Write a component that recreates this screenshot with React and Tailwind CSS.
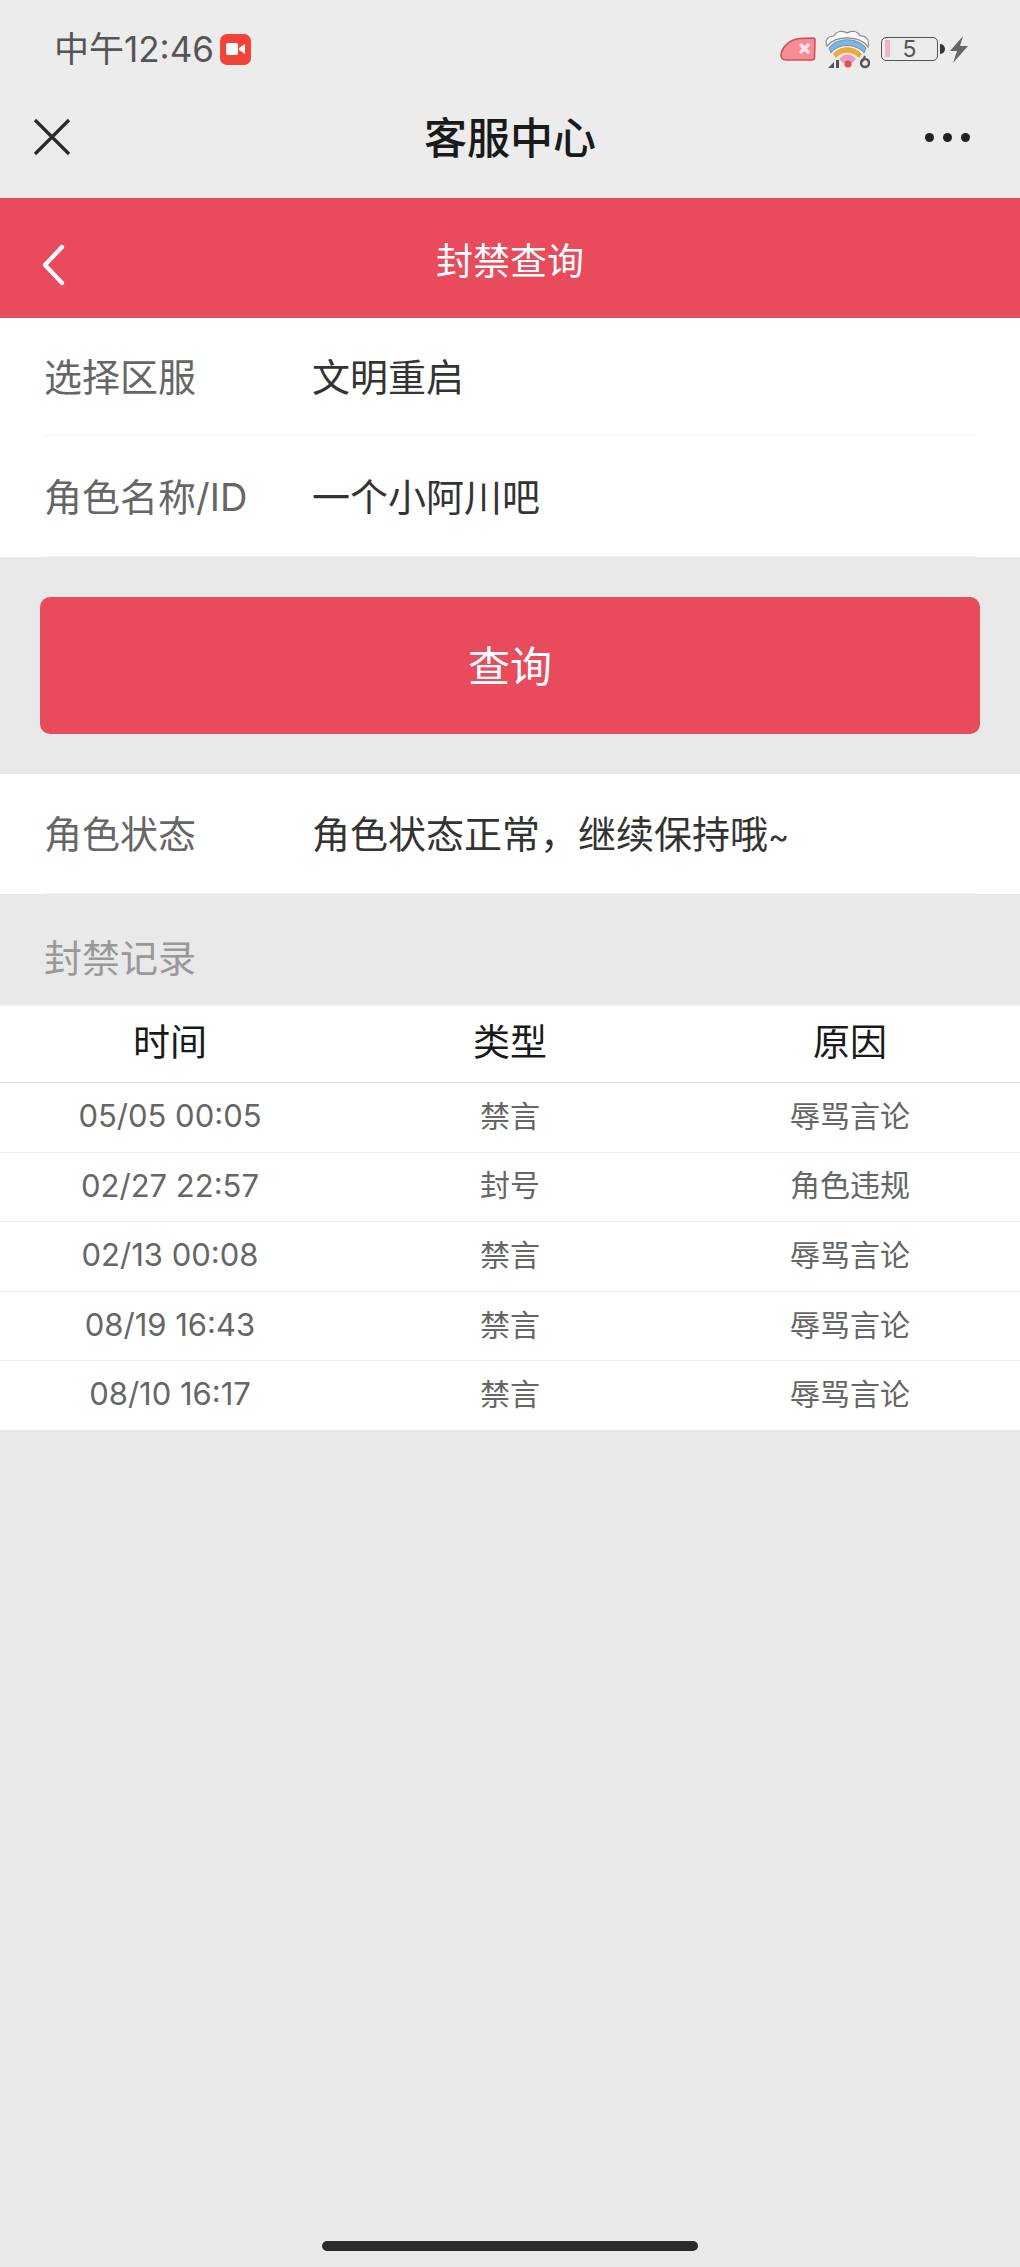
import React from 'react'

const records = [
  { time: '05/05 00:05', type: '禁言', reason: '辱骂言论' },
  { time: '02/27 22:57', type: '封号', reason: '角色违规' },
  { time: '02/13 00:08', type: '禁言', reason: '辱骂言论' },
  { time: '08/19 16:43', type: '禁言', reason: '辱骂言论' },
  { time: '08/10 16:17', type: '禁言', reason: '辱骂言论' },
]

function StatusIcons() {
  return (
    <div className="flex items-center">
      {/* 红色标签 */}
      <svg width="36" height="24" viewBox="0 0 36 24">
        <path d="M1 18 C2 9 11 2 20 1.5 L33 1 Q35 1 35 3 L34.5 21 Q34.5 23 32 23 L6 23 Q1 23 1 18 Z" fill="#f88b93" stroke="#c9525e" strokeWidth="1.6" />
        <path d="M21 8 L28 15 M28 8 L21 15" stroke="#fbe9ea" strokeWidth="3.2" strokeLinecap="round" />
      </svg>
      {/* 彩虹 wifi */}
      <svg className="ml-[8px]" width="46" height="40" viewBox="0 0 46 40">
        <path d="M3 17 C0 10 5 7 10 7 C12 2 19 1 23 4 C27 1 34 2 36 7 C41 6 46 10 44 18 C36 6 12 6 3 17 Z" fill="#fff" stroke="#8a8a8a" strokeWidth="1.2" />
        <path d="M5 19 C13 8 33 8 42 19 L40 24 C32 14 14 14 7 24 Z" fill="#79b7e4" stroke="#6d7f90" strokeWidth="0.8" />
        <path d="M9 25 C16 16 30 16 38 25 L35 29 C29 22 17 22 12 29 Z" fill="#eeaa38" />
        <path d="M15 30 C20 24 27 24 32 30 L28 34 H19 Z" fill="#ee9bb5" />
        <circle cx="24" cy="35" r="3.6" fill="#d9505f" />
        <path d="M4 39 L10 33 V39 Z M12 31 H15 V39 H12 Z" fill="#555" />
        <circle cx="41" cy="34" r="4" fill="none" stroke="#555" strokeWidth="2.4" />
        <path d="M38 33 L41 27" stroke="#555" strokeWidth="2" />
      </svg>
      {/* 电量 */}
      <div className="relative ml-[11px] flex h-[24px] w-[57px] items-center justify-center rounded-[5px] border-[1.5px] border-[#555] text-[23px] leading-none text-[#555]">
        <span className="absolute left-[3px] top-[2px] h-[17px] w-[5px] bg-[#efb4c0]" />
        5
      </div>
      <span className="ml-[2px] h-[10px] w-[5px] rounded-r-[5px] bg-[#333]" />
      <svg className="ml-[5px]" width="18" height="27" viewBox="0 0 18 27">
        <path d="M13 0 L0 15 H7 L3 27 L18 10 H10 Z" fill="#666" />
      </svg>
    </div>
  )
}

function FormRow({ label, value, className = '' }) {
  return (
    <div className={`flex items-center border-b border-[#f3f3f3] pt-[2px] ${className}`}>
      <div className="w-[268px] text-[38px] text-[#666]">{label}</div>
      <div className="text-[38px] text-[#333]">{value}</div>
    </div>
  )
}

export default function App() {
  return (
    <div className="flex min-h-[2267px] w-[1020px] flex-col bg-[#e9e9e9] font-['Inter','Noto_Sans_CJK_SC',sans-serif]">
      <div className="bg-[#ececec]">
        <div className="flex h-[96px] items-center justify-between pl-[54px] pr-[52px] pt-[2px]">
          <div className="flex items-center">
            <span className="w-[155px] text-[35px] leading-none text-[#555] whitespace-nowrap">中午12:46</span>
            <span className="ml-[11px] flex h-[31px] w-[31px] items-center justify-center rounded-[7px] bg-[#f04438]">
              <svg width="20" height="12" viewBox="0 0 20 12">
                <rect x="0" y="0" width="12" height="12" rx="2" fill="#fff" />
                <path d="M13 5 L19 1 V11 L13 7 Z" fill="#fff" />
              </svg>
            </span>
          </div>
          <StatusIcons />
        </div>
        <div className="relative flex h-[102px] items-start justify-between pl-[33px] pr-[50px] pt-[22px]">
          <svg width="38" height="38" viewBox="0 0 38 38">
            <path d="M2 2 L36 36 M36 2 L2 36" stroke="#2a2a2a" strokeWidth="3.2" />
          </svg>
          <h1 className="absolute inset-x-0 top-[19px] text-center text-[43px] font-medium leading-[46px] text-[#1a1a1a]">客服中心</h1>
          <div className="mt-[15px] flex gap-[9px]">
            <span className="h-[9px] w-[9px] rounded-full bg-[#222]" />
            <span className="h-[9px] w-[9px] rounded-full bg-[#222]" />
            <span className="h-[9px] w-[9px] rounded-full bg-[#222]" />
          </div>
        </div>
      </div>

      <div className="relative flex h-[120px] items-center justify-center bg-[#e74b5c] pt-[8px]">
        <svg className="absolute left-[40px] top-[46px]" width="26" height="42" viewBox="0 0 26 42">
          <path d="M22 3 L5 21 L22 39" fill="none" stroke="#fff" strokeWidth="4.2" strokeLinecap="round" strokeLinejoin="round" />
        </svg>
        <h2 className="text-[37px] text-white">封禁查询</h2>
      </div>

      <div className="bg-white px-[44px]">
        <FormRow className="h-[118px]" label="选择区服" value="文明重启" />
        <FormRow className="h-[121px]" label="角色名称/ID" value="一个小阿川吧" />
      </div>

      <div className="px-[40px] py-[40px]">
        <button className="h-[137px] w-full rounded-[10px] bg-[#e74b5c] pt-[2px] text-[42px] text-white">查询</button>
      </div>

      <div className="bg-white px-[44px]">
        <FormRow
          className="h-[120px]"
          label="角色状态"
          value={<>角色状态正常，继续保持哦<span className="text-[32px]">~</span></>}
        />
      </div>

      <div className="flex h-[110px] items-center px-[44px] pt-[18px] text-[38px] text-[#999]">封禁记录</div>

      <div className="border-t-[2px] border-[#f2f2f2] bg-white">
        <div className="grid h-[77px] grid-cols-3 items-center border-b border-[#e4e4e4] pb-[2px] text-center text-[37px] text-[#1a1a1a]">
          <div>时间</div>
          <div>类型</div>
          <div>原因</div>
        </div>
        {records.map((r) => (
          <div key={r.time} className="grid h-[69.6px] grid-cols-3 items-center border-b border-[#ececec] pb-[2px] text-center text-[30px] text-[#666]">
            <div className="text-[31px]">{r.time}</div>
            <div>{r.type}</div>
            <div>{r.reason}</div>
          </div>
        ))}
      </div>

      <div className="mb-[16px] mt-auto h-[10px] w-[376px] self-center rounded-full bg-[#2b2b2b]" />
    </div>
  )
}
